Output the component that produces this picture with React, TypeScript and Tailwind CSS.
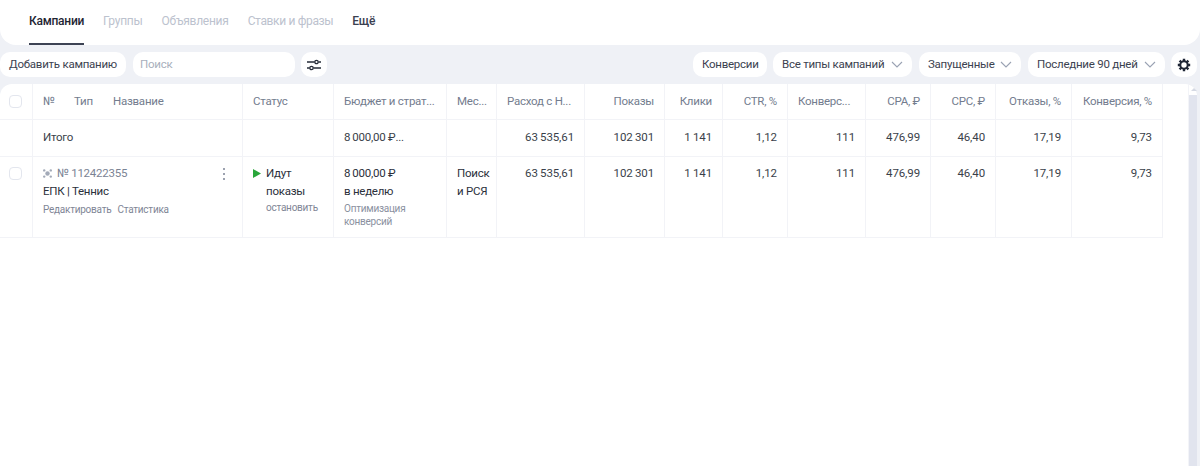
import React from "react";

// thin space between thousands, as in the reference numbers
const totals = ["63\u2009535,61", "102\u2009301", "1\u2009141", "1,12", "111", "476,99", "46,40", "17,19", "9,73"];

const headCell = "flex h-[36px] items-center border-r border-b border-[#f2f3f7] px-[10px] text-[11.5px] text-[#737c8e] whitespace-nowrap";
const numCell = "border-r border-b border-[#f2f3f7] pr-[10px] text-right text-[11.5px] tracking-[-0.1px] text-[#3a3f4a] whitespace-nowrap";

function Chevron() {
  return (
    <svg width="12" height="7" viewBox="0 0 12 7" fill="none">
      <path d="M1 1l5 5 5-5" stroke="#9aa2b3" strokeWidth="1.1" />
    </svg>
  );
}

function Select({ label, width }: { label: string; width: string }) {
  return (
    <div className={`flex h-[25px] items-center justify-between whitespace-nowrap rounded-[10px] bg-white pl-[9px] pr-[9px] text-[11.5px] text-[#3c4250] ${width}`}>
      {label}
      <Chevron />
    </div>
  );
}

function FilterIcon() {
  return (
    <svg width="14" height="12" viewBox="0 0 14 12" fill="none">
      <path d="M0 3h7.5M11.5 3H14M0 9h2.5M6.5 9H14" stroke="#262c38" strokeWidth="1.3" />
      <circle cx="9.5" cy="3" r="1.7" stroke="#262c38" strokeWidth="1.3" />
      <circle cx="4.5" cy="9" r="1.7" stroke="#262c38" strokeWidth="1.3" />
    </svg>
  );
}

function GearIcon() {
  return (
    <svg width="14" height="14" viewBox="0 0 14 14" fill="none">
      <circle cx="7" cy="7" r="3.7" stroke="#1f2636" strokeWidth="2" />
      <path
        d="M7 0.8V3M7 11v2.2M0.8 7H3M11 7h2.2M2.6 2.6l1.9 1.9M9.5 9.5l1.9 1.9M11.4 2.6L9.5 4.5M4.5 9.5l-1.9 1.9"
        stroke="#1f2636"
        strokeWidth="2.4"
      />
    </svg>
  );
}

function CampaignIcon() {
  return (
    <svg width="9" height="9" viewBox="0 0 9 9" fill="#a3aab8" className="mr-[5px]">
      <circle cx="4.5" cy="4.5" r="2.2" />
      <circle cx="1.2" cy="1.4" r="1.2" />
      <circle cx="7.8" cy="1.4" r="1.2" />
      <circle cx="1.2" cy="7.6" r="1.2" />
      <circle cx="7.8" cy="7.6" r="1.2" />
    </svg>
  );
}

function Check() {
  return <div className="h-[13px] w-[13px] rounded-[4px] border border-[#e3e6ee] bg-white" />;
}

export default function App() {
  return (
    <div className="flex h-[466px] w-[1200px] flex-col overflow-hidden bg-[#eff1f6] font-['Roboto',sans-serif] tracking-[-0.25px]">
      {/* tabs */}
      <div className="flex h-[45px] shrink-0 items-start gap-[19px] rounded-b-[16px] bg-white pl-[29px] text-[12px]">
        <div className="flex h-[45px] items-start border-b-2 border-[#3d4354] pt-[12px] font-medium text-[#1f2533]">Кампании</div>
        <div className="pt-[12px] text-[#bcc2ce]">Группы</div>
        <div className="pt-[12px] text-[#bcc2ce]">Объявления</div>
        <div className="pt-[12px] tracking-[-0.35px] text-[#bcc2ce]">Ставки и фразы</div>
        <div className="pt-[12px] font-medium text-[#3a4050]">Ещё</div>
      </div>

      {/* toolbar */}
      <div className="flex h-[39px] shrink-0 items-center justify-between pr-[3px]">
        <div className="flex items-center">
          <div className="flex h-[25px] w-[126px] items-center whitespace-nowrap rounded-[10px] bg-white pl-[9px] text-[11.5px] text-[#3c4250]">Добавить кампанию</div>
          <div className="ml-[7px] flex h-[25px] w-[162px] items-center rounded-[10px] bg-white pl-[7px] text-[11.5px] text-[#a9afbc]">Поиск</div>
          <div className="ml-[6px] flex h-[25px] w-[26px] items-center justify-center rounded-[10px] bg-white">
            <FilterIcon />
          </div>
        </div>
        <div className="flex items-center">
          <div className="flex h-[25px] w-[74px] items-center whitespace-nowrap rounded-[10px] bg-white pl-[9px] text-[11.5px] text-[#3c4250]">Конверсии</div>
          <div className="ml-[6px] flex items-center gap-[7px]">
            <Select label="Все типы кампаний" width="w-[139px]" />
            <Select label="Запущенные" width="w-[102px]" />
            <Select label="Последние 90 дней" width="w-[137px]" />
          </div>
          <div className="ml-[6px] flex h-[25px] w-[26px] items-center justify-center rounded-[10px] bg-white">
            <GearIcon />
          </div>
        </div>
      </div>

      {/* table card */}
      <div className="mr-[3px] flex min-h-0 flex-1 rounded-t-[12px] bg-white">
        <div className="grid h-fit w-[1163px] grid-cols-[33px_210px_91px_113px_50px_88px_80px_58px_65px_78px_65px_65px_76px_91px] grid-rows-[36px_37px_81px]">
          {/* header */}
          <div className={`${headCell} !px-0 !pl-[9px]`}>
            <Check />
          </div>
          <div className={headCell}>
            <span className="w-[31px]">№</span>
            <span className="w-[39px]">Тип</span>
            <span>Название</span>
          </div>
          <div className={headCell}>Статус</div>
          <div className={headCell}>Бюджет и страт...</div>
          <div className={headCell}>Мес...</div>
          <div className={headCell}>Расход с Н...</div>
          <div className={`${headCell} justify-end`}>Показы</div>
          <div className={`${headCell} justify-end`}>Клики</div>
          <div className={`${headCell} justify-end`}>CTR, %</div>
          <div className={headCell}>Конверс...</div>
          <div className={`${headCell} justify-end`}>CPA, ₽</div>
          <div className={`${headCell} justify-end`}>CPC, ₽</div>
          <div className={`${headCell} justify-end`}>Отказы, %</div>
          <div className={`${headCell} justify-end`}>Конверсия, %</div>

          {/* total */}
          <div className="border-r border-b border-[#f2f3f7]" />
          <div className="border-r border-b border-[#f2f3f7] pl-[10px] pt-[10px] text-[11.5px] leading-[15px] text-[#3a3f4a]">Итого</div>
          <div className="border-r border-b border-[#f2f3f7]" />
          <div className="border-r border-b border-[#f2f3f7] pl-[10px] pt-[10px] text-[11.5px] leading-[15px] text-[#3a3f4a]">8{"\u2009"}000,00 ₽...</div>
          <div className="border-r border-b border-[#f2f3f7]" />
          {totals.map((v, i) => (
            <div key={i} className={`${numCell} pt-[10px] leading-[15px]`}>
              {v}
            </div>
          ))}

          {/* campaign */}
          <div className="border-r border-b border-[#f2f3f7] pl-[9px] pt-[10px]">
            <Check />
          </div>
          <div className="relative border-r border-b border-[#f2f3f7] pl-[10px] pt-[9px]">
            <div className="flex h-[15px] items-center text-[11.5px] text-[#7b8394]">
              <CampaignIcon />№ 112422355
            </div>
            <div className="mt-[2px] text-[11.5px] leading-[16px] text-[#2b303b]">ЕПК | Теннис</div>
            <div className="mt-[4px] flex gap-[6px] text-[10px] leading-[14px] text-[#7f8696]">
              <span>Редактировать</span>
              <span>Статистика</span>
            </div>
            <div className="absolute right-[17px] top-[11px] flex flex-col gap-[3px]">
              <div className="h-[2px] w-[2px] rounded-full bg-[#7b8394]" />
              <div className="h-[2px] w-[2px] rounded-full bg-[#7b8394]" />
              <div className="h-[2px] w-[2px] rounded-full bg-[#7b8394]" />
            </div>
          </div>
          <div className="flex border-r border-b border-[#f2f3f7] pl-[10px] pt-[8px]">
            <svg width="8" height="9" viewBox="0 0 8 9" className="mt-[4px] shrink-0">
              <path d="M0 0l8 4.5L0 9z" fill="#2aa63a" />
            </svg>
            <div className="ml-[5px]">
              <div className="text-[11.5px] leading-[17.5px] text-[#2b303b]">
                Идут
                <br />
                показы
              </div>
              <div className="mt-[1px] text-[10px] leading-[14px] text-[#7f8696]">остановить</div>
            </div>
          </div>
          <div className="border-r border-b border-[#f2f3f7] pl-[10px] pt-[8px]">
            <div className="text-[11.5px] leading-[17.5px] text-[#2b303b]">
              8{"\u2009"}000,00 ₽
              <br />в неделю
            </div>
            <div className="mt-[2px] text-[10px] leading-[13px] text-[#8a91a0]">
              Оптимизация
              <br />
              конверсий
            </div>
          </div>
          <div className="border-r border-b border-[#f2f3f7] pl-[10px] pt-[8px] text-[11.5px] leading-[17.5px] text-[#2b303b]">
            Поиск
            <br />и РСЯ
          </div>
          {totals.map((v, i) => (
            <div key={i} className={`${numCell} pt-[9px] leading-[15px]`}>
              {v}
            </div>
          ))}
        </div>

        {/* scrollbar */}
        <div className="ml-[25px] flex w-[9px] flex-col border-l border-[#f3f4f8] pt-[4px]">
          <div className="ml-[2px] h-0 w-0 border-x-[3px] border-b-[3px] border-x-transparent border-b-[#d5d9e3]" />
          <div className="mt-[4px] flex-1 bg-[#e1e4ee]" />
        </div>
      </div>
    </div>
  );
}
